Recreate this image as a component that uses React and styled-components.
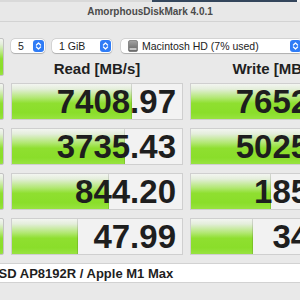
import React from "react";
import styled, { createGlobalStyle } from "styled-components";

const results = [
  { label: "SEQ1M QD8", read: 7408.97, write: 7652.5 },
  { label: "SEQ1M QD1", read: 3735.43, write: 5025.96 },
  { label: "RND4K QD64", read: 844.2, write: 185.46 },
  { label: "RND4K QD1", read: 47.99, write: 34.89 },
];

// log scale like the app: 10 MB/s ~ 28%, 10 GB/s ~ 72%
const fillPercent = (v) => Math.max(0, Math.min(100, 13.5 + 14.6 * Math.log10(v)));

const Stepper = () => (
  <StepperBox>
    <svg width="11" height="12" viewBox="0 0 11 12">
      <rect x="0" y="0" width="11" height="12" rx="3" fill="#2f7cf6" />
      <path d="M3.4 5 L5.5 3 L7.6 5" stroke="#fff" strokeWidth="1.2" fill="none" strokeLinecap="round" strokeLinejoin="round" />
      <path d="M3.4 7 L5.5 9 L7.6 7" stroke="#fff" strokeWidth="1.2" fill="none" strokeLinecap="round" strokeLinejoin="round" />
    </svg>
  </StepperBox>
);

const DiskIcon = () => (
  <svg width="10" height="12" viewBox="0 0 10 12">
    <defs>
      <linearGradient id="hd" x1="0" y1="0" x2="0" y2="1">
        <stop offset="0" stopColor="#a4a4a4" />
        <stop offset="0.6" stopColor="#7b7b7b" />
        <stop offset="1" stopColor="#6a6a6a" />
      </linearGradient>
    </defs>
    <rect x="0.5" y="0.5" width="9" height="11" rx="1.5" fill="url(#hd)" stroke="#5e5e5e" strokeWidth="0.6" />
    <rect x="1.5" y="8" width="7" height="2" rx="0.5" fill="#c4c4c4" />
  </svg>
);

const Select = ({ width, children }) => (
  <SelectBox $width={width}>
    <SelectLabel>{children}</SelectLabel>
    <Stepper />
  </SelectBox>
);

const ResultCell = ({ value }) => (
  <Cell>
    <Fill style={{ width: `${fillPercent(value)}%` }} />
    <Value>{value.toFixed(2)}</Value>
  </Cell>
);

const App = () => {
  return (
    <>
      <GlobalStyle />
      <TopStrip />
      <Window>
        <TitleBar>AmorphousDiskMark 4.0.1</TitleBar>
        <Board>
          <Row>
            <TestButton>All</TestButton>
            <TopArea>
              <Controls>
                <Select width={34}>5</Select>
                <Select width={60}>1 GiB</Select>
                <Select width={181}>
                  <DiskIcon />
                  <span>Macintosh HD (7% used)</span>
                </Select>
              </Controls>
              <Headers>
                <Header>Read [MB/s]</Header>
                <Header>Write [MB/s]</Header>
              </Headers>
            </TopArea>
          </Row>
          {results.map((r) => (
            <Row key={r.label}>
              <TestButton>{r.label}</TestButton>
              <ResultCell value={r.read} />
              <ResultCell value={r.write} />
            </Row>
          ))}
          <Info>APPLE SSD AP8192R / Apple M1 Max</Info>
        </Board>
      </Window>
    </>
  );
};

export default App;

const GlobalStyle = createGlobalStyle`
  html, body {
    margin: 0;
    padding: 0;
    width: 300px;
    height: 300px;
    overflow: hidden;
    background: #e9e9e9;
    font-family: "Liberation Sans", Arial, sans-serif;
  }
`;

const TopStrip = styled.div`
  height: 2px;
  background: linear-gradient(
    to right,
    #d9d9d9 0,
    #d9d9d9 152px,
    #34465c 152px,
    #34465c 297px,
    #f4f4f4 297px
  );
`;

const Window = styled.div`
  width: 452px;
  margin-left: -76px;
  background: #e9e9e9;
`;

const TitleBar = styled.div`
  height: 19px;
  border-bottom: 1px solid #d3d3d3;
  background: #e8e8e8;
  display: flex;
  align-items: center;
  justify-content: center;
  font-size: 10px;
  font-weight: 700;
  color: #4b4b4b;
`;

const Board = styled.div`
  display: flex;
  flex-direction: column;
  gap: 8px;
  padding: 16px 14px 0 10px;
`;

const Row = styled.div`
  display: grid;
  grid-template-columns: 70px 172px 172px;
  column-gap: 7px;
  height: 37px;
`;

const green = `linear-gradient(
  to bottom,
  #f3f5f1 0%,
  #e4eedb 14%,
  #b5e879 38%,
  #8fdf30 55%,
  #8ade2a 82%,
  #98e340 100%
)`;

const TestButton = styled.div`
  box-sizing: border-box;
  border: 1px solid #c3c3c3;
  border-radius: 2px;
  background: ${green};
  display: flex;
  align-items: center;
  justify-content: center;
  font-size: 12px;
  font-weight: 700;
  color: #1d1d1d;
`;

const TopArea = styled.div`
  grid-column: 2 / 4;
  display: flex;
  flex-direction: column;
  padding-top: 1px;
  gap: 7px;
`;

const Controls = styled.div`
  display: flex;
  gap: 7px;
  height: 14px;

  & > :nth-child(3) {
    margin-left: 2px;
  }
`;

const SelectBox = styled.div`
  box-sizing: border-box;
  width: ${(p) => p.$width}px;
  height: 14px;
  background: #ffffff;
  border-radius: 4px;
  box-shadow: 0 0 0 0.5px rgba(0, 0, 0, 0.16), 0 0.5px 1px rgba(0, 0, 0, 0.18);
  display: flex;
  align-items: center;
  justify-content: space-between;
  padding: 0 1px 0 7px;
`;

const SelectLabel = styled.div`
  display: flex;
  align-items: center;
  gap: 4px;
  font-size: 10.5px;
  color: #222222;
  white-space: nowrap;
`;

const StepperBox = styled.div`
  display: flex;
  width: 11px;
  height: 12px;
`;

const Headers = styled.div`
  display: grid;
  grid-template-columns: 172px 172px;
  column-gap: 7px;
`;

const Header = styled.div`
  text-align: center;
  font-size: 15px;
  line-height: 15px;
  padding-top: 1px;
  font-weight: 700;
  color: #1f1f1f;
`;

const Cell = styled.div`
  position: relative;
  box-sizing: border-box;
  border: 1px solid #cfcfcf;
  background: #f2f2f2;
  display: flex;
  align-items: center;
  justify-content: flex-end;
  padding-right: 6px;
  overflow: hidden;
`;

const Fill = styled.div`
  position: absolute;
  left: 0;
  top: 0;
  bottom: 0;
  background: ${green};
  border-right: 1px solid rgba(0, 0, 0, 0.12);
`;

const Value = styled.div`
  position: relative;
  font-size: 33px;
  line-height: 1;
  font-weight: 700;
  color: #1e1e1e;
  letter-spacing: 0;
`;

const Info = styled.div`
  height: 20px;
  box-sizing: border-box;
  background: #ffffff;
  border: 1px solid #d2d2d2;
  display: flex;
  align-items: center;
  padding-left: 8px;
  font-size: 13px;
  font-weight: 700;
  color: #1e1e1e;
  white-space: nowrap;
`;
